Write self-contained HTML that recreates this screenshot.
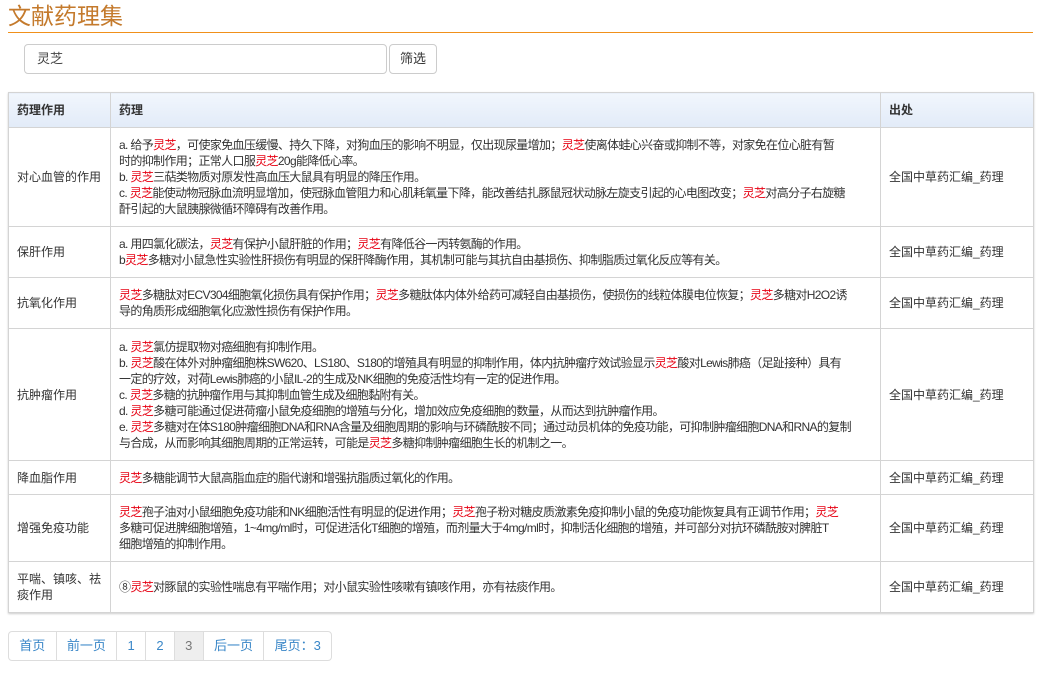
<!DOCTYPE html>
<html><head><meta charset="utf-8"><style>
*{box-sizing:border-box;margin:0;padding:0}
body{width:1062px;height:680px;background:#fff;font-family:"Liberation Sans","Noto Sans CJK SC",sans-serif;font-size:12px;color:#333;position:relative;overflow:hidden}
h1{position:absolute;left:8px;top:2px;font-size:23px;font-weight:normal;color:#c47a2c;line-height:28px}
.line{position:absolute;left:8px;top:32px;width:1025px;height:1px;background:#f0901a}
.inp{position:absolute;left:24px;top:44px;width:363px;height:30px;border:1px solid #ccc;border-radius:4px;padding:0 12px;line-height:28px;font-size:13px;color:#444}
.btn{position:absolute;left:389px;top:44px;width:48px;height:30px;border:1px solid #ccc;border-radius:4px;text-align:center;line-height:28px;font-size:13px;color:#333}
table{position:absolute;left:8px;top:92px;width:1025px;border-collapse:collapse;table-layout:fixed;box-shadow:0 1px 2px rgba(0,0,0,.2)}
td,th{border:1px solid #d4d4d4;padding:0 8px;line-height:16px;vertical-align:middle;text-align:left;white-space:nowrap;overflow:hidden}
td:nth-child(2){letter-spacing:-0.65px}
th{height:35px;font-weight:bold;background:linear-gradient(#f1f6fd,#e2ebf8);color:#333}
.r{color:#e60012}
.pg{position:absolute;left:8px;top:631px;height:30px;display:flex;border:1px solid #ddd;border-radius:4px}
.pg span{display:block;height:28px;line-height:28px;padding:0 10.3px;color:#3a87c8;font-size:13px;border-left:1px solid #ddd}
.pg span:first-child{border-left:none}
.pg span.a{background:#eee;color:#777}
</style></head><body>
<h1>文献药理集</h1><div class="line"></div>
<div class="inp">灵芝</div><div class="btn">筛选</div>
<table>
<colgroup><col style="width:102px"><col style="width:770px"><col style="width:153px"></colgroup>
<tr><th>药理作用</th><th>药理</th><th>出处</th></tr>
<tr style="height:99px"><td>对心血管的作用</td><td>a. 给予<span class="r">灵芝</span>，可使家免血压缓慢、持久下降，对狗血压的影响不明显，仅出现尿量增加；<span class="r">灵芝</span>使离体蛙心兴奋或抑制不等，对家免在位心脏有暂<br>时的抑制作用；正常人口服<span class="r">灵芝</span>20g能降低心率。<br>b. <span class="r">灵芝</span>三萜类物质对原发性高血压大鼠具有明显的降压作用。<br>c. <span class="r">灵芝</span>能使动物冠脉血流明显增加，使冠脉血管阻力和心肌耗氧量下降，能改善结扎豚鼠冠状动脉左旋支引起的心电图改变；<span class="r">灵芝</span>对高分子右旋糖<br>酐引起的大鼠胰腺微循环障碍有改善作用。</td><td>全国中草药汇编_药理</td></tr>
<tr style="height:51px"><td>保肝作用</td><td>a. 用四氯化碳法，<span class="r">灵芝</span>有保护小鼠肝脏的作用；<span class="r">灵芝</span>有降低谷一丙转氨酶的作用。<br>b<span class="r">灵芝</span>多糖对小鼠急性实验性肝损伤有明显的保肝降酶作用，其机制可能与其抗自由基损伤、抑制脂质过氧化反应等有关。</td><td>全国中草药汇编_药理</td></tr>
<tr style="height:51px"><td>抗氧化作用</td><td><span class="r">灵芝</span>多糖肽对ECV304细胞氧化损伤具有保护作用；<span class="r">灵芝</span>多糖肽体内体外给药可减轻自由基损伤，使损伤的线粒体膜电位恢复；<span class="r">灵芝</span>多糖对H2O2诱<br>导的角质形成细胞氧化应激性损伤有保护作用。</td><td>全国中草药汇编_药理</td></tr>
<tr style="height:132px"><td>抗肿瘤作用</td><td>a. <span class="r">灵芝</span>氯仿提取物对癌细胞有抑制作用。<br>b. <span class="r">灵芝</span>酸在体外对肿瘤细胞株SW620、LS180、S180的增殖具有明显的抑制作用，体内抗肿瘤疗效试验显示<span class="r">灵芝</span>酸对Lewis肺癌（足趾接种）具有<br>一定的疗效，对荷Lewis肺癌的小鼠IL-2的生成及NK细胞的免疫活性均有一定的促进作用。<br>c. <span class="r">灵芝</span>多糖的抗肿瘤作用与其抑制血管生成及细胞黏附有关。<br>d. <span class="r">灵芝</span>多糖可能通过促进荷瘤小鼠免疫细胞的增殖与分化，增加效应免疫细胞的数量，从而达到抗肿瘤作用。<br>e. <span class="r">灵芝</span>多糖对在体S180肿瘤细胞DNA和RNA含量及细胞周期的影响与环磷酰胺不同；通过动员机体的免疫功能，可抑制肿瘤细胞DNA和RNA的复制<br>与合成，从而影响其细胞周期的正常运转，可能是<span class="r">灵芝</span>多糖抑制肿瘤细胞生长的机制之一。</td><td>全国中草药汇编_药理</td></tr>
<tr style="height:34px"><td>降血脂作用</td><td><span class="r">灵芝</span>多糖能调节大鼠高脂血症的脂代谢和增强抗脂质过氧化的作用。</td><td>全国中草药汇编_药理</td></tr>
<tr style="height:67px"><td>增强免疫功能</td><td><span class="r">灵芝</span>孢子油对小鼠细胞免疫功能和NK细胞活性有明显的促进作用；<span class="r">灵芝</span>孢子粉对糖皮质激素免疫抑制小鼠的免疫功能恢复具有正调节作用；<span class="r">灵芝</span><br>多糖可促进脾细胞增殖，1~4mg/ml时，可促进活化T细胞的增殖，而剂量大于4mg/ml时，抑制活化细胞的增殖，并可部分对抗环磷酰胺对脾脏T<br>细胞增殖的抑制作用。</td><td>全国中草药汇编_药理</td></tr>
<tr style="height:51px"><td>平喘、镇咳、祛<br>痰作用</td><td>⑧<span class="r">灵芝</span>对豚鼠的实验性喘息有平喘作用；对小鼠实验性咳嗽有镇咳作用，亦有祛痰作用。</td><td>全国中草药汇编_药理</td></tr>
</table>
<div class="pg"><span>首页</span><span>前一页</span><span>1</span><span>2</span><span class="a">3</span><span>后一页</span><span>尾页：3</span></div>
</body></html>
